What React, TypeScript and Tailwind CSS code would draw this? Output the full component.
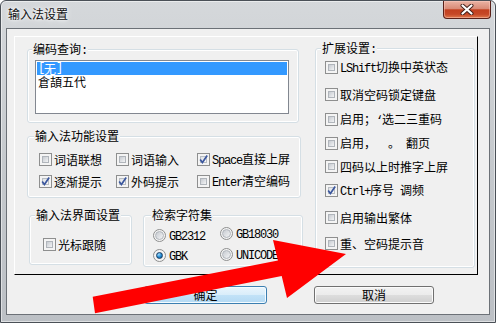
import React from "react";

function isNarrow(ch: string) {
  const c = ch.codePointAt(0) || 0;
  return c < 0x2e80;
}

function Txt({ s }: { s: string }) {
  const parts: { narrow: boolean; t: string }[] = [];
  for (const ch of s) {
    const n = isNarrow(ch);
    const last = parts[parts.length - 1];
    if (last && last.narrow === n) last.t += ch;
    else parts.push({ narrow: n, t: ch });
  }
  return (
    <>
      {parts.map((p, i) =>
        p.narrow ? (
          <span
            key={i}
            className="inline-block font-['Liberation_Mono',monospace] text-[12px] tracking-[-1.2px] whitespace-pre"
          >
            {p.t}
          </span>
        ) : (
          <span key={i} className="inline-block">
            {p.t}
          </span>
        )
      )}
    </>
  );
}

function Box({ checked }: { checked?: boolean }) {
  return (
    <span className="relative flex w-[13px] h-[13px] shrink-0 border border-[#8e8f8f] bg-[#f4f4f4] p-[2px]">
      <span
        className={
          checked
            ? "flex-1 border border-[#b8bdc3] bg-gradient-to-br from-[#dfe2e6] to-[#f8f8f8]"
            : "flex-1 border border-[#b0b5bb] bg-gradient-to-br from-[#c7cbd1] to-[#f3f4f5]"
        }
      />
      {checked && (
        <svg className="absolute left-0 top-0" width="11" height="11" viewBox="0 0 11 11">
          <path d="M2.2 5.6 L4.4 8.6 L9.2 1.6" fill="none" stroke="#3b579e" strokeWidth="1.7" />
        </svg>
      )}
    </span>
  );
}

function Radio({ checked }: { checked?: boolean }) {
  return (
    <span className="flex w-[13px] h-[13px] shrink-0 items-center justify-center rounded-full border border-[#8e8f8f] bg-[#f4f4f4]">
      {checked ? (
        <span className="w-[7px] h-[7px] rounded-full border border-[#1c3e62] bg-[radial-gradient(circle_at_35%_30%,#9edcff,#1d86cf_55%,#0b4d86)]" />
      ) : (
        <span className="w-[9px] h-[9px] rounded-full border border-[#b0b5bb] bg-gradient-to-br from-[#c7cbd1] to-[#f3f4f5]" />
      )}
    </span>
  );
}

function Check({ label, checked }: { label: string; checked?: boolean }) {
  return (
    <div className="flex h-[13px] items-center gap-[2px] leading-[13px] whitespace-nowrap">
      <Box checked={checked} />
      <span className="inline-block">
        <Txt s={label} />
      </span>
    </div>
  );
}

function RadioItem({ label, checked }: { label: string; checked?: boolean }) {
  return (
    <div className="flex h-[13px] items-center gap-[3px] leading-[13px] whitespace-nowrap">
      <Radio checked={checked} />
      <span className="inline-block">
        <Txt s={label} />
      </span>
    </div>
  );
}

function GroupLabel({ s, left }: { s: string; left: string }) {
  return (
    <span
      className={
        "absolute -top-[8px] bg-[#f0f0f0] px-[1px] leading-[14px] whitespace-nowrap " + left
      }
    >
      <Txt s={s} />
    </span>
  );
}

const groupCls =
  "relative rounded-[3px] border border-[#d5dfe5] shadow-[inset_0_0_0_1px_#ffffff]";

function Arrow() {
  return (
    <svg
      className="pointer-events-none absolute left-0 top-0"
      width="496"
      height="323"
      viewBox="0 0 496 323"
    >
      <polygon
        points="92.7,296.7 277.9,260.4 273,240 346,254 287,298 281.7,276 95,313.3"
        fill="#ff0000"
      />
    </svg>
  );
}

export default function App() {
  return (
    <div className="relative w-[496px] h-[323px] overflow-hidden bg-white font-['Noto_Sans_CJK_SC',sans-serif] text-[12px] text-black">
      <div className="flex h-full w-full flex-col rounded-t-[6px] border border-[#4a5057] bg-gradient-to-b from-[#d5d8db] via-[#c5c9cd] to-[#bcc0c5] shadow-[inset_0_0_0_1px_rgba(255,255,255,0.5)]">
        {/* title bar */}
        <div className="flex h-[27px] items-start justify-between pl-[7px] pr-[4px]">
          <span className="mt-[5px] leading-[16px] text-[#111] [text-shadow:0_0_6px_#fff,0_0_3px_#fff]">
            输入法设置
          </span>
          <div className="flex h-[18px] w-[48px] items-center justify-center rounded-b-[4px] border border-t-0 border-[#5a2119] bg-[linear-gradient(#eab3a4,#d98b77_45%,#c2401f_52%,#c64827_78%,#e0794c)] shadow-[inset_0_0_0_1px_rgba(255,210,200,0.45)]">
            <svg width="14" height="11" viewBox="0 0 14 11">
              <path
                d="M2.5 1.5 L11.5 9.5 M11.5 1.5 L2.5 9.5"
                stroke="#3f1d17"
                strokeWidth="4"
                strokeLinecap="round"
              />
              <path
                d="M2.5 1.5 L11.5 9.5 M11.5 1.5 L2.5 9.5"
                stroke="#ffffff"
                strokeWidth="2.2"
                strokeLinecap="round"
              />
            </svg>
          </div>
        </div>

        {/* client area */}
        <div className="mx-[5px] flex h-[287px] flex-col border border-[#6c7177] bg-[#f0f0f0]">
          {/* panel */}
          <div className="ml-[7px] mt-[7px] flex h-[239px] w-[464px] border border-t-white border-l-white border-r-black border-b-black pl-[12px] pt-[11px]">
            {/* left column */}
            <div className="mt-[1px] flex w-[276px] flex-col">
              <div className={groupCls + " h-[74px] w-[272px]"}>
                <GroupLabel s="编码查询:" left="left-[4px]" />
                <div className="ml-[7px] mt-[10px] h-[54px] w-[254px] border border-[#828790] bg-white p-[1px]">
                  <div className="flex h-[13px] items-center bg-[#3399ff] pl-[1px] leading-[13px] text-white">
                    <Txt s="[无]" />
                  </div>
                  <div className="flex h-[13px] items-center pl-[1px] leading-[13px]">
                    <Txt s="倉頡五代" />
                  </div>
                </div>
              </div>

              <div className={groupCls + " mt-[13px] h-[62px] w-[274px]"}>
                <GroupLabel s="输入法功能设置" left="left-[6px]" />
                <div className="grid grid-cols-[77px_81px_auto] gap-y-[9px] pl-[11px] pt-[16px]">
                  <Check label="词语联想" />
                  <Check label="词语输入" />
                  <Check label="Space直接上屏" checked />
                  <Check label="逐渐提示" checked />
                  <Check label="外码提示" checked />
                  <Check label="Enter清空编码" />
                </div>
              </div>

              <div className="mt-[17px] flex items-start">
                <div className={groupCls + " ml-[2px] h-[50px] w-[103px]"}>
                  <GroupLabel s="输入法界面设置" left="left-[5px]" />
                  <div className="pl-[13px] pt-[22px]">
                    <Check label="光标跟随" />
                  </div>
                </div>
                <div className={groupCls + " ml-[11px] h-[52px] w-[160px]"}>
                  <GroupLabel s="检索字符集" left="left-[7px]" />
                  <div className="grid grid-cols-[67px_auto] gap-y-[7px] pl-[9px] pt-[13px]">
                    <RadioItem label="GB2312" />
                    <div className="-mt-[2px]">
                      <RadioItem label="GB18030" />
                    </div>
                    <RadioItem label="GBK" checked />
                    <div className="-mt-[1px]">
                      <RadioItem label="UNICODE" />
                    </div>
                  </div>
                </div>
              </div>
            </div>

            {/* right column */}
            <div className={groupCls + " ml-[12px] h-[220px] w-[160px]"}>
              <GroupLabel s="扩展设置:" left="left-[5px]" />
              <div className="flex flex-col pl-[9px] pt-[12px]">
                <Check label="LShift切换中英状态" />
                <div className="mt-[14px]">
                  <Check label="取消空码锁定键盘" />
                </div>
                <div className="mt-[12px]">
                  <Check label="启用；‘选二三重码" />
                </div>
                <div className="mt-[11px]">
                  <Check label="启用，  。 翻页" />
                </div>
                <div className="mt-[10px]">
                  <Check label="四码以上时推字上屏" />
                </div>
                <div className="mt-[11px]">
                  <Check label="Ctrl+序号 调频" checked />
                </div>
                <div className="mt-[14px]">
                  <Check label="启用输出繁体" />
                </div>
                <div className="mt-[13px]">
                  <Check label="重、空码提示音" />
                </div>
              </div>
            </div>
          </div>

          {/* buttons */}
          <div className="mt-[11px] flex">
            <button className="ml-[137px] flex h-[18px] w-[123px] items-center justify-center rounded-[3px] border border-[#3c7fb1] bg-[linear-gradient(#eaf5fc,#d9edfa_50%,#c2e2f7_51%,#b3d9f3)] leading-[16px] shadow-[inset_0_0_0_1px_#f4fbff]">
              确定
            </button>
            <button className="ml-[47px] flex h-[18px] w-[120px] items-center justify-center rounded-[3px] border border-[#707070] bg-[linear-gradient(#f2f2f2,#ebebeb_50%,#dddddd_51%,#cfcfcf)] leading-[16px] shadow-[inset_0_0_0_1px_#fbfbfb]">
              取消
            </button>
          </div>
        </div>
      </div>
      <Arrow />
    </div>
  );
}
